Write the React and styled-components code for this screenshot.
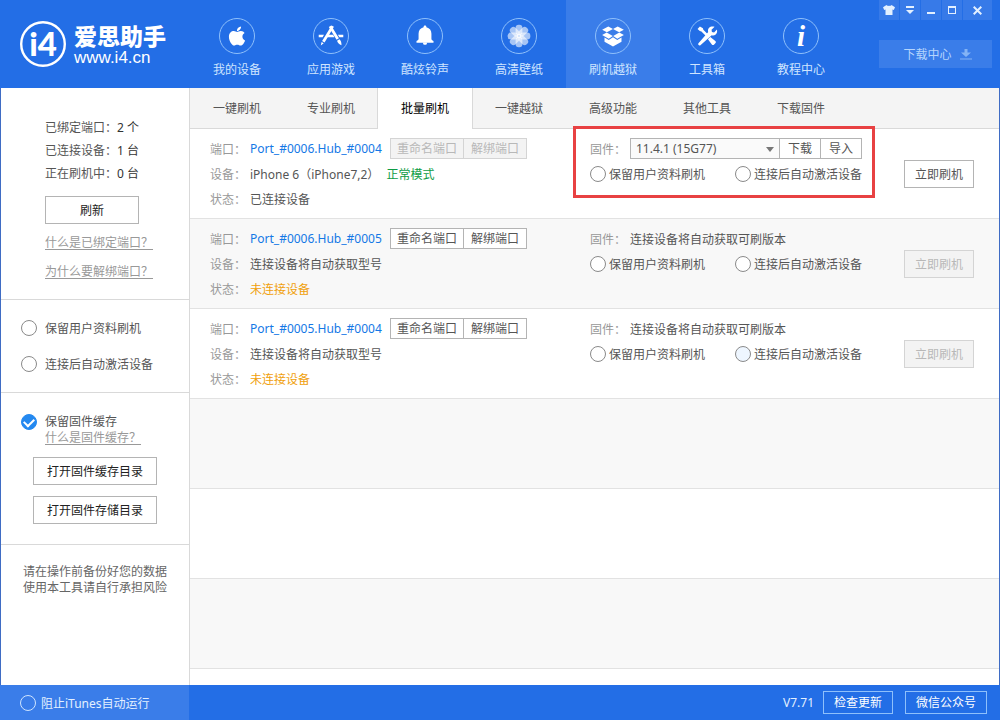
import styled, { createGlobalStyle } from "styled-components";
import { FaApple } from "react-icons/fa";

const GlobalStyle = createGlobalStyle`
  * {
    box-sizing: border-box;
  }
  body {
    margin: 0;
    background: white;
  }
  body, button, select, input {
    font-family: "Noto Sans", "Noto Sans CJK SC", sans-serif;
    font-size: 12px;
    color: #555;
  }
`;

const Window = styled.div`
  min-height: 100vh;
  display: flex;
  flex-direction: column;
`;

/* header */

const Header = styled.header`
  display: flex;
  height: 88px;
  background-color: #236ee6;
`;
const Brand = styled.a`
  width: 190px;
  padding: 21px 0 0 20px;
  display: flex;
  gap: 8px;
  color: white;
  text-decoration: none;
`;
const BrandText = styled.div`
  display: flex;
  flex-direction: column;
`;
const BrandName = styled.span`
  font-family: "Noto Sans CJK SC", sans-serif;
  font-size: 23px;
  font-weight: 900;
  line-height: 28px;
`;
const BrandSite = styled.span`
  font-family: "Liberation Sans", sans-serif;
  font-size: 17px;
  line-height: 17px;
`;
const Nav = styled.nav`
  display: flex;
  flex: 1;
`;
const NavItem = styled.a`
  width: 94px;
  padding-top: 18px;
  display: flex;
  flex-direction: column;
  align-items: center;
  gap: 8px;
  color: #cfe5ff;
  line-height: 16px;
  text-decoration: none;
  background-color: ${(props) => (props.$active ? "#3a7de9" : "transparent")};
`;
const Ring = styled.span`
  width: 36px;
  height: 36px;
  display: flex;
  align-items: center;
  justify-content: center;
  border: 1px solid #8fc0fb;
  border-radius: 50%;
  color: white;
`;
const InfoLetter = styled.span`
  font-family: "Liberation Serif", serif;
  font-size: 29px;
  font-style: italic;
  font-weight: 700;
  line-height: 34px;
`;
const HeaderSide = styled.div`
  padding-right: 8px;
  display: flex;
  flex-direction: column;
  gap: 20px;
`;
const WindowButtons = styled.div`
  display: flex;
  gap: 1px;
`;
const WindowButton = styled.button`
  width: ${(props) => (props.$wide ? "29px" : "20px")};
  height: 20px;
  padding: 0;
  display: flex;
  align-items: center;
  justify-content: center;
  border: none;
  background-color: #377ae8;
  color: #e3f0ff;
  cursor: pointer;
`;
const DownloadButton = styled.button`
  height: 28px;
  padding: 0 0 0 4px;
  display: flex;
  align-items: center;
  justify-content: center;
  gap: 8px;
  border: none;
  background-color: #3a7de9;
  color: #b5d5fd;
  cursor: pointer;
`;

/* shared controls */

const Button = styled.button`
  height: 28px;
  width: ${(props) => props.$width};
  padding: 2px 0 0;
  border: 1px solid #b4b4b4;
  background-color: white;
  color: ${(props) => (props.$dark ? "#222" : "#555")};
  line-height: 16px;
  cursor: pointer;
  &:disabled {
    border-color: #d4d4d4;
    background-color: #f3f3f3;
    color: #b8b8b8;
    cursor: default;
  }
`;
const SmallButton = styled(Button)`
  height: 21px;
  padding: 0;
`;
const ButtonGroup = styled.div`
  display: flex;
  button:not(:first-child) {
    margin-left: -1px;
  }
`;
const Check = styled.label`
  display: flex;
  align-items: center;
  gap: ${(props) => props.$gap || "3px"};
  cursor: pointer;
`;
const CheckInput = styled.input`
  appearance: none;
  width: 16px;
  height: 16px;
  margin: 0;
  display: grid;
  place-content: center;
  border: 1px solid ${(props) => (props.$light ? "#cfe5ff" : "#8a8a8a")};
  border-radius: 50%;
  background-color: ${(props) => {
    if (props.$light) return "transparent";
    return props.$hovered ? "#eef6ff" : "white";
  }};
  &:checked {
    border-color: #2489f0;
    background-color: #2489f0;
  }
  &:checked::after {
    content: "";
    width: 8px;
    height: 5px;
    margin-bottom: 2px;
    border-left: 2px solid white;
    border-bottom: 2px solid white;
    transform: rotate(-45deg);
  }
`;

/* body */

const Body = styled.div`
  flex: 1;
  display: flex;
  border: solid #3f6cc4;
  border-width: 0 1px;
`;
const Sidebar = styled.aside`
  width: 189px;
  border-right: 1px solid #d9d9d9;
`;
const Section = styled.section`
  padding: ${(props) => props.$pad};
  display: flex;
  flex-direction: column;
  align-items: flex-start;
  gap: ${(props) => props.$gap || "0"};
  border-bottom: 1px solid #d9d9d9;
  &:last-child {
    border-bottom: none;
  }
`;
const Stats = styled.dl`
  margin: 0 0 11px;
`;
const Stat = styled.div`
  display: flex;
  line-height: 23px;
  dd {
    margin: 0;
    color: #333;
  }
`;
const HelpLink = styled.a`
  margin-top: ${(props) => (props.$tight ? "0" : "9px")};
  color: #999;
  line-height: ${(props) => (props.$tight ? "16px" : "20px")};
  text-underline-offset: 2px;
`;
const OptionRow = styled.div`
  height: 20px;
  display: flex;
  align-items: center;
`;
const CacheOption = styled.div`
  line-height: 16px;
`;
const CacheHelp = styled.div`
  padding-left: 24px;
  line-height: 16px;
`;
const FolderButtons = styled.div`
  margin: 11px 0 0 12px;
  display: flex;
  flex-direction: column;
  gap: 11px;
`;
const Notice = styled.p`
  margin: 0;
  color: #666;
  line-height: 16px;
`;

const Main = styled.main`
  flex: 1;
  min-width: 0;
  display: flex;
  flex-direction: column;
`;
const Tabs = styled.nav`
  height: 41px;
  display: flex;
  background-color: #f4f4f4;
  border-bottom: 1px solid #d9d9d9;
`;
const Tab = styled.a`
  width: ${(props) => (props.$active ? "96px" : "94px")};
  height: 41px;
  margin: ${(props) => (props.$active ? "0 -1px" : "0")};
  border: solid ${(props) => (props.$active ? "#d9d9d9" : "transparent")};
  border-width: ${(props) => (props.$active ? "0 1px" : "0")};
  background-color: ${(props) => (props.$active ? "white" : "transparent")};
  color: ${(props) => (props.$active ? "#000" : "#555")};
  line-height: 42px;
  text-align: center;
  text-decoration: none;
`;

const PortList = styled.ul`
  flex: 1;
  margin: 0;
  padding: 0;
  display: flex;
  flex-direction: column;
  list-style: none;
`;
const PortRow = styled.li`
  min-height: 90px;
  padding: 7px 25px 7px 20px;
  display: flex;
  border-bottom: 1px solid #e2e2e2;
  &:nth-child(even) {
    background-color: #f8f8f8;
  }
`;
const Filler = styled(PortRow)`
  &:last-child {
    flex: 1;
    min-height: 16px;
    padding: 0;
    border-bottom: none;
  }
`;
const PortInfo = styled.div`
  flex: 1;
`;
const Line = styled.div`
  height: 25px;
  display: flex;
  align-items: center;
`;
const FieldLabel = styled.span`
  width: 40px;
  color: #999;
  white-space: nowrap;
`;
const PortName = styled.a`
  min-width: 140px;
  color: #1478e6;
  text-decoration: none;
`;
const Mode = styled.span`
  margin-left: 7px;
  color: #0e9c45;
`;
const Status = styled.span`
  color: ${(props) => (props.$connected ? "#555" : "#f0a00c")};
`;
const Firmware = styled.div`
  position: relative;
  width: 272px;
  margin-right: 42px;
`;
const Highlight = styled.div`
  position: absolute;
  inset: -10px -13px 13px -17px;
  border: 3px solid #e84142;
  pointer-events: none;
`;
const SelectBox = styled.div`
  position: relative;
  width: 150px;
  margin-right: -1px;
`;
const Select = styled.select`
  appearance: none;
  display: block;
  width: 100%;
  height: 21px;
  padding: 0 20px 0 5px;
  border: 1px solid #b4b4b4;
  border-radius: 0;
  background-color: #fafafa;
`;
const Caret = styled.svg`
  position: absolute;
  top: 9px;
  right: 6px;
  pointer-events: none;
`;
const CheckPair = styled(Line)`
  justify-content: space-between;
`;
const Action = styled.div`
  padding-top: 24px;
`;

/* footer */

const Footer = styled.footer`
  height: 35px;
  display: flex;
  background-color: #236ee6;
  color: #e3f0ff;
`;
const FooterOption = styled.div`
  width: 189px;
  padding-left: 20px;
  display: flex;
  align-items: center;
  background-color: #3a7de9;
`;
const FooterSide = styled.div`
  flex: 1;
  padding-right: 13px;
  display: flex;
  align-items: center;
  justify-content: flex-end;
`;
const FooterButton = styled.button`
  height: 23px;
  width: ${(props) => props.$width};
  margin-left: ${(props) => props.$gap};
  padding: 0;
  border: 1px solid #8fc0fb;
  background-color: transparent;
  color: white;
  line-height: 16px;
  cursor: pointer;
`;

const Icon = ({ children }) => (
  <svg width="36" height="36" viewBox="0 0 36 36" fill="currentColor" aria-hidden="true">
    {children}
  </svg>
);

const AppsIcon = () => (
  <Icon>
    <path d="M5 16.7h5.6l-1.5 2.7H5zM15.2 16.7h5l1.5 2.7h-8.1zM25.3 16.7H31v2.7h-4.1z" />
    <path d="M18.6 6.8l2.5 1.4-9.9 16.7-2.6-1.5zM8 24.4l2.3 1.4L7.2 28z" />
    <path d="M15.7 8.4l2.5-1.5 8.2 13.6-2.5 1.5zM24.4 22.9l2.6-1.5c1.6 1.6 2.2 3.7 2.1 6.3-2.3-.9-4.1-2.3-4.7-4.8z" />
  </Icon>
);

const BellIcon = () => (
  <Icon>
    <path d="M18 7c1 0 1.5.7 1.5 1.8 3.5.8 5.3 3.5 5.3 6.8V21c0 1 .8 1.7 2.2 2.2v2H9v-2c1.4-.5 2.2-1.2 2.2-2.2v-5.4c0-3.3 1.8-6 5.3-6.8C16.5 7.7 17 7 18 7z" />
    <path d="M16 25h4v1.2c0 .7-.9 1-2 1s-2-.3-2-1z" />
  </Icon>
);

const FlowerIcon = () => (
  <Icon>
    {[0, 45, 90, 135, 180, 225, 270, 315].map((angle) => (
      <rect
        key={angle}
        x="14.4"
        y="6"
        width="7.2"
        height="11"
        rx="3.2"
        fillOpacity="0.6"
        transform={`rotate(${angle} 18 18)`}
      />
    ))}
    <circle cx="18" cy="18" r="2.5" fillOpacity="0.8" />
  </Icon>
);

const BoxIcon = () => (
  <Icon>
    <path d="M13 8l5 2.5-6.5 3.6-5-2.7zM23 8l-5 2.5 6.5 3.6 5-2.7z" />
    <path d="M11.3 14.3l6.5 3.8-4.3 2.7-7-3.8zM24.7 14.3l-6.5 3.8 4.3 2.7 7-3.8z" />
    <path d="M9 19.7l4.5 2.5L18 19.4l4.5 2.8 4.5-2.5v4.5L18 29l-9-4.8z" />
  </Icon>
);

const ToolsIcon = () => (
  <Icon>
    <path d="M8 10.5L10.5 8l3.2 1.7.4 1.6 5.3 5.3-2 2-5.3-5.3-1.7-.5z" />
    <path d="M19 21.5l2.5-2.5 5.3 4.3c.8.8.8 1.7 0 2.5l-1.2 1.2c-.8.8-1.7.8-2.5 0z" />
    <path d="M26 8.3l-3.2 3.2.4 2.3 2.3.4 3-3c.6 2.3 0 4.2-1.3 5.2-1.2 1-2.8 1.2-4.2.8L11.3 27.5c-.7.7-1.6.7-2.2.1s-.6-1.5.1-2.2l10.1-11.6c-.5-1.5-.3-3.2.9-4.5 1.4-1.4 3.5-1.9 5.8-1z" />
  </Icon>
);

const LogoMark = () => (
  <svg width="46" height="46" viewBox="0 0 46 46" aria-hidden="true">
    <circle cx="23" cy="23" r="21.8" fill="none" stroke="white" strokeWidth="2.4" />
    <text
      x="23"
      y="35"
      fill="white"
      textAnchor="middle"
      fontFamily="Lato, sans-serif"
      fontSize="33"
      fontWeight="900"
    >
      i4
    </text>
  </svg>
);

const navItems = [
  { title: "我的设备", icon: <FaApple size={22} /> },
  { title: "应用游戏", icon: <AppsIcon /> },
  { title: "酷炫铃声", icon: <BellIcon /> },
  { title: "高清壁纸", icon: <FlowerIcon /> },
  { title: "刷机越狱", icon: <BoxIcon />, active: true },
  { title: "工具箱", icon: <ToolsIcon /> },
  { title: "教程中心", icon: <InfoLetter aria-hidden="true">i</InfoLetter> },
];

const tabs = ["一键刷机", "专业刷机", "批量刷机", "一键越狱", "高级功能", "其他工具", "下载固件"];

const stats = [
  { label: "已绑定端口：", value: "2 个" },
  { label: "已连接设备：", value: "1 台" },
  { label: "正在刷机中：", value: "0 台" },
];

const ports = [
  {
    name: "Port_#0006.Hub_#0004",
    device: "iPhone 6（iPhone7,2）",
    mode: "正常模式",
    status: "已连接设备",
    connected: true,
    firmware: "11.4.1 (15G77)",
  },
  {
    name: "Port_#0006.Hub_#0005",
    device: "连接设备将自动获取型号",
    status: "未连接设备",
  },
  {
    name: "Port_#0005.Hub_#0004",
    device: "连接设备将自动获取型号",
    status: "未连接设备",
    hovered: true,
  },
];

const PortItem = ({ port }) => (
  <PortRow>
    <PortInfo>
      <Line>
        <FieldLabel>端口：</FieldLabel>
        <PortName href="#port">{port.name}</PortName>
        <ButtonGroup>
          <SmallButton $width="74px" disabled={port.connected}>重命名端口</SmallButton>
          <SmallButton $width="64px" disabled={port.connected}>解绑端口</SmallButton>
        </ButtonGroup>
      </Line>
      <Line>
        <FieldLabel>设备：</FieldLabel>
        <span>{port.device}</span>
        {port.mode && <Mode>{port.mode}</Mode>}
      </Line>
      <Line>
        <FieldLabel>状态：</FieldLabel>
        <Status $connected={port.connected}>{port.status}</Status>
      </Line>
    </PortInfo>
    <Firmware>
      <Line>
        <FieldLabel>固件：</FieldLabel>
        {port.connected ? (
          <>
            <SelectBox>
              <Select aria-label="固件">
                <option>{port.firmware}</option>
              </Select>
              <Caret width="8" height="5" viewBox="0 0 8 5" aria-hidden="true">
                <path d="M0 0h8L4 5z" fill="#777" />
              </Caret>
            </SelectBox>
            <ButtonGroup>
              <SmallButton $width="42px">下载</SmallButton>
              <SmallButton $width="42px">导入</SmallButton>
            </ButtonGroup>
          </>
        ) : (
          <span>连接设备将自动获取可刷版本</span>
        )}
      </Line>
      <CheckPair>
        <Check>
          <CheckInput type="checkbox" />
          保留用户资料刷机
        </Check>
        <Check>
          <CheckInput type="checkbox" $hovered={port.hovered} />
          连接后自动激活设备
        </Check>
      </CheckPair>
      {port.connected && <Highlight />}
    </Firmware>
    <Action>
      <Button $width="70px" disabled={!port.connected}>立即刷机</Button>
    </Action>
  </PortRow>
);

const App = () => {
  return (
    <Window>
      <GlobalStyle />
      <Header>
        <Brand href="#home">
          <LogoMark />
          <BrandText>
            <BrandName>爱思助手</BrandName>
            <BrandSite>www.i4.cn</BrandSite>
          </BrandText>
        </Brand>
        <Nav>
          {navItems.map((item) => (
            <NavItem key={item.title} href="#nav" $active={item.active}>
              <Ring>{item.icon}</Ring>
              {item.title}
            </NavItem>
          ))}
        </Nav>
        <HeaderSide>
          <WindowButtons>
            <WindowButton aria-label="皮肤">
              <svg width="12" height="10" viewBox="0 0 12 10" fill="currentColor">
                <path d="M3.5 0C4.5 1.2 7.5 1.2 8.5 0L12 2.2 10.8 5 9.5 4.5V10h-7V4.5L1.2 5 0 2.2z" />
              </svg>
            </WindowButton>
            <WindowButton aria-label="菜单">
              <svg width="8" height="8" viewBox="0 0 8 8" fill="currentColor">
                <path d="M0 0h8v2H0zM0 4h8L4 8z" />
              </svg>
            </WindowButton>
            <WindowButton aria-label="最小化">
              <svg width="8" height="8" viewBox="0 0 8 8" fill="currentColor">
                <path d="M0 6h8v2H0z" />
              </svg>
            </WindowButton>
            <WindowButton aria-label="最大化">
              <svg width="8" height="8" viewBox="0 0 8 8" fill="currentColor">
                <path d="M0 0h8v8H0zM1 2v5h6V2z" fillRule="evenodd" />
              </svg>
            </WindowButton>
            <WindowButton aria-label="关闭" $wide>
              <svg width="9" height="9" viewBox="0 0 9 9" stroke="currentColor" strokeWidth="2">
                <path d="M.7.7l7.6 7.6M8.3.7L.7 8.3" />
              </svg>
            </WindowButton>
          </WindowButtons>
          <DownloadButton>
            下载中心
            <svg width="12" height="12" viewBox="0 0 12 12" fill="#84b4f5" aria-hidden="true">
              <path d="M4.5 1h3v3.5H11L6 9 1 4.500h3.500zM0 10.500h12v1H0z" />
            </svg>
          </DownloadButton>
        </HeaderSide>
      </Header>
      <Body>
        <Sidebar>
          <Section $pad="28px 0 17px 44px">
            <Stats>
              {stats.map((stat) => (
                <Stat key={stat.label}>
                  <dt>{stat.label}</dt>
                  <dd>{stat.value}</dd>
                </Stat>
              ))}
            </Stats>
            <Button $width="94px" $dark>刷新</Button>
            <HelpLink href="#bound">什么是已绑定端口？</HelpLink>
            <HelpLink href="#unbind">为什么要解绑端口？</HelpLink>
          </Section>
          <Section $pad="18px 0 18px 20px" $gap="16px">
            <OptionRow>
              <Check $gap="8px">
                <CheckInput type="checkbox" />
                保留用户资料刷机
              </Check>
            </OptionRow>
            <OptionRow>
              <Check $gap="8px">
                <CheckInput type="checkbox" />
                连接后自动激活设备
              </Check>
            </OptionRow>
          </Section>
          <Section $pad="21px 0 20px 20px">
            <CacheOption>
              <Check $gap="8px">
                <CheckInput type="checkbox" defaultChecked />
                保留固件缓存
              </Check>
            </CacheOption>
            <CacheHelp>
              <HelpLink href="#cache" $tight>什么是固件缓存？</HelpLink>
            </CacheHelp>
            <FolderButtons>
              <Button $width="124px" $dark>打开固件缓存目录</Button>
              <Button $width="124px" $dark>打开固件存储目录</Button>
            </FolderButtons>
          </Section>
          <Section $pad="19px 0 18px 22px">
            <Notice>
              请在操作前备份好您的数据
              <br />
              使用本工具请自行承担风险
            </Notice>
          </Section>
        </Sidebar>
        <Main>
          <Tabs>
            {tabs.map((tab) => (
              <Tab key={tab} href="#tab" $active={tab === "批量刷机"}>
                {tab}
              </Tab>
            ))}
          </Tabs>
          <PortList>
            {ports.map((port) => (
              <PortItem key={port.name} port={port} />
            ))}
            <Filler />
            <Filler />
            <Filler />
            <Filler />
          </PortList>
        </Main>
      </Body>
      <Footer>
        <FooterOption>
          <Check $gap="5px">
            <CheckInput type="checkbox" $light />
            阻止iTunes自动运行
          </Check>
        </FooterOption>
        <FooterSide>
          <span>V7.71</span>
          <FooterButton $width="70px" $gap="9px">检查更新</FooterButton>
          <FooterButton $width="82px" $gap="12px">微信公众号</FooterButton>
        </FooterSide>
      </Footer>
    </Window>
  );
};

export default App;
